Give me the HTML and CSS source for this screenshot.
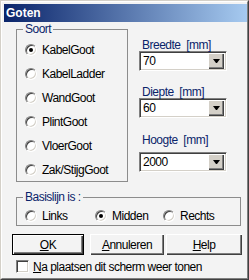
FILE: index.html
```html
<!DOCTYPE html>
<html lang="nl">
  <head>
    <meta charset="utf-8">
    <title>Goten</title>
    <link rel="stylesheet" href="styles.css">
  </head>
  <body>
    <div class="window">
      <div class="frame">
        <div class="titlebar">Goten</div>

        <div class="client">
          <div class="top-row">
            <fieldset class="group soort">
              <legend>Soort</legend>
              <div class="option"><span class="radio checked"></span>KabelGoot</div>
              <div class="option"><span class="radio"></span>KabelLadder</div>
              <div class="option"><span class="radio"></span>WandGoot</div>
              <div class="option"><span class="radio"></span>PlintGoot</div>
              <div class="option"><span class="radio"></span>VloerGoot</div>
              <div class="option"><span class="radio"></span>Zak/StijgGoot</div>
            </fieldset>

            <div class="fields">
              <div class="field-label">Breedte&nbsp; [mm]</div>
              <div class="combo">
                <span class="combo-value">70</span>
                <span class="combo-btn"><svg width="7" height="4" viewBox="0 0 7 4"><path d="M0 0h7L4 4H3z"/></svg></span>
              </div>

              <div class="field-label diepte">Diepte&nbsp; [mm]</div>
              <div class="combo">
                <span class="combo-value">60</span>
                <span class="combo-btn"><svg width="7" height="4" viewBox="0 0 7 4"><path d="M0 0h7L4 4H3z"/></svg></span>
              </div>

              <div class="field-label hoogte">Hoogte&nbsp; [mm]</div>
              <div class="combo combo-hoogte">
                <span class="combo-value">2000</span>
                <span class="combo-btn"><svg width="7" height="4" viewBox="0 0 7 4"><path d="M0 0h7L4 4H3z"/></svg></span>
              </div>
            </div>
          </div>

          <fieldset class="group basis">
            <legend>Basislijn is :</legend>
            <div class="basis-row">
              <div class="option links"><span class="radio"></span>Links</div>
              <div class="option midden"><span class="radio checked"></span>Midden</div>
              <div class="option"><span class="radio"></span>Rechts</div>
            </div>
          </fieldset>

          <div class="buttons">
            <button class="btn btn-ok"><u>O</u>K</button>
            <button class="btn btn-cancel"><u>A</u>nnuleren</button>
            <button class="btn btn-help"><u>H</u>elp</button>
          </div>

          <div class="check"><span class="checkbox"></span><span><u>N</u>a plaatsen dit scherm weer tonen</span></div>
        </div>
      </div>
    </div>
  </body>
</html>
```

FILE: styles.css
```css
body
{
	margin: 0;
	font-family: "Liberation Sans", Arial, sans-serif;
	font-size: 12px;
	letter-spacing: -0.5px;
	color: #000;
}
.window
{
	width: 249px;
	height: 280px;
	box-sizing: border-box;
	border: 1px solid;
	border-color: #d4d0c8 #404040 #404040 #d4d0c8;
	background: #f3f3f3;
}
.frame
{
	height: 100%;
	box-sizing: border-box;
	border: 1px solid;
	border-color: #fff #808080 #808080 #fff;
	padding: 2px 0 2px 2px;
}
.titlebar
{
	height: 18px;
	line-height: 18px;
	padding-left: 2px;
	background: linear-gradient(to right, #0a246a, #a6caf0);
	color: #fff;
	font-weight: bold;
	font-size: 12px;
	letter-spacing: 0;
}
.client
{
	padding-top: 1px;
}
.top-row
{
	display: flex;
	align-items: flex-start;
}

/* group boxes */
.group
{
	margin: 0 0 0 12px;
	border: 1px solid #8c8c8c;
	min-width: 0;
	box-sizing: border-box;
}
.group legend
{
	padding: 0 2px;
	margin-left: -2px;
	line-height: 13px;
	color: #0a246a;
}
.soort
{
	width: 112px;
	padding: 6px 0 3px 8px;
	display: flex;
	flex-direction: column;
	gap: 8px;
}
.option
{
	display: flex;
	align-items: center;
	height: 16px;
	gap: 5px;
	white-space: nowrap;
}
.radio
{
	width: 12px;
	height: 12px;
	box-sizing: border-box;
	border-radius: 50%;
	border: 1px solid;
	border-color: #808080 #fff #fff #808080;
	box-shadow: inset 1px 1px #404040, inset -1px -1px #d4d0c8;
	background: #fff;
	display: grid;
	place-items: center;
	flex: none;
}
.radio.checked::after
{
	content: "";
	width: 4px;
	height: 4px;
	border-radius: 50%;
	background: #000;
}

/* right column */
.fields
{
	margin-left: 11px;
	padding-top: 16px;
	width: 88px;
}
.field-label
{
	line-height: 12px;
	padding-left: 3px;
	color: #0a246a;
	white-space: nowrap;
}
.field-label.diepte
{
	margin-top: 15px;
}
.field-label.hoogte
{
	margin-top: 16px;
}
.combo
{
	display: flex;
	align-items: center;
	height: 20px;
	box-sizing: border-box;
	padding: 2px;
	border: 1px solid;
	border-color: #808080 #fff #fff #808080;
	box-shadow: inset 1px 1px #404040, inset -1px -1px #d4d0c8;
	background: #fff;
}
.combo-hoogte
{
	margin-top: 6px;
}
.combo-value
{
	flex: 1;
	padding-left: 1px;
	line-height: 16px;
}
.combo-btn
{
	width: 16px;
	height: 16px;
	display: grid;
	place-items: center;
	background: #d4d0c8;
	box-shadow: inset 1px 1px #fff, inset -1px -1px #404040, inset -2px -2px #808080;
}

/* basislijn */
.basis
{
	margin-top: 9px;
	width: 225px;
	padding: 4px 0 1px 8px;
}
.basis-row
{
	display: flex;
}
.links
{
	width: 70px;
}
.midden
{
	width: 68px;
}

/* buttons */
.buttons
{
	display: flex;
	margin: 8px 0 0 8px;
}
.btn
{
	height: 21px;
	box-sizing: border-box;
	border: none;
	padding: 0;
	background: #f3f3f3;
	font: inherit;
	letter-spacing: inherit;
	color: #000;
	box-shadow: inset 1px 1px #fff, inset -1px -1px #404040, inset -2px -2px #808080;
}
.btn-ok
{
	width: 72px;
	border: 1px solid #000;
}
.btn-cancel
{
	width: 74px;
	margin-left: 6px;
}
.btn-help
{
	width: 76px;
	margin-left: 2px;
}

/* checkbox */
.check
{
	display: flex;
	align-items: center;
	gap: 4px;
	margin: 5px 0 0 12px;
	height: 13px;
	white-space: nowrap;
}
.checkbox
{
	width: 13px;
	height: 13px;
	box-sizing: border-box;
	border: 1px solid;
	border-color: #808080 #fff #fff #808080;
	box-shadow: inset 1px 1px #404040, inset -1px -1px #d4d0c8;
	background: #fff;
	flex: none;
}
```
